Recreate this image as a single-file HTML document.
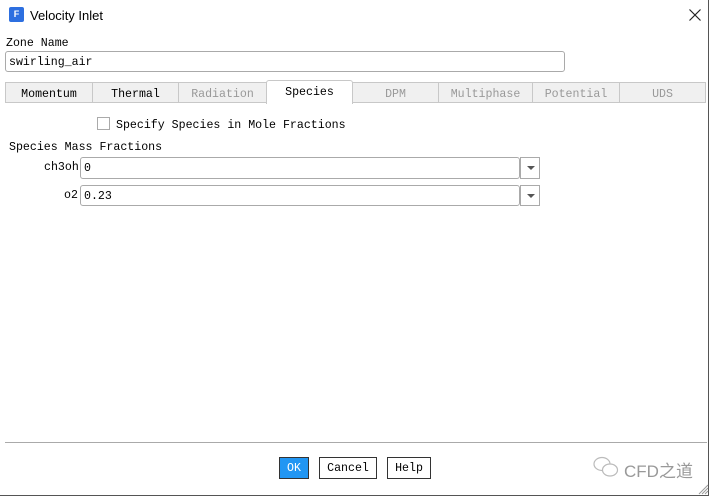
<!DOCTYPE html><html><head><style>
*{box-sizing:border-box;margin:0;padding:0}
body{width:711px;height:497px;background:#fff;font-family:"Liberation Mono",monospace;font-size:11.6px;color:#000;position:relative;overflow:hidden}
.a{position:absolute}
.tab{position:absolute;top:82px;height:21px;border:1px solid #c8c8c8;background:#f0f0f0;text-align:center;line-height:23px}
.dis{color:#999}
.inp{position:absolute;border:1px solid #aaa;border-radius:3px;background:#fff;padding-left:3px;line-height:22px}
.dd{position:absolute;width:20px;border:1px solid #aaa;background:#fff}
.dd:after{content:"";position:absolute;left:6px;top:8px;border-left:4px solid transparent;border-right:4px solid transparent;border-top:4px solid #555}
.btn{position:absolute;top:457px;height:22px;border:1px solid #333;text-align:center;line-height:22px;background:#fff}
</style></head><body>
<div class="a" style="left:0;top:0;width:709px;height:496px;border-right:1px solid #555;border-bottom:1px solid #555"></div>
<div class="a" style="left:9px;top:7px;width:15px;height:15px;background:#2d6fe0;border-radius:2px;color:#fff;font:bold 9px 'Liberation Sans',sans-serif;text-align:center;line-height:15px">F</div>
<div class="a" style="left:30px;top:8px;font:13px 'Liberation Sans',sans-serif">Velocity Inlet</div>
<svg class="a" style="left:689px;top:9px" width="12" height="12"><path d="M0.5 0.5L11.5 11.5M11.5 0.5L0.5 11.5" stroke="#222" stroke-width="1.2"/></svg>
<div class="a" style="left:6px;top:37px">Zone Name</div>
<div class="inp" style="left:5px;top:51px;width:560px;height:21px">swirling_air</div>
<div class="tab" style="left:5px;width:88px">Momentum</div>
<div class="tab" style="left:92px;width:87px">Thermal</div>
<div class="tab dis" style="left:178px;width:89px">Radiation</div>
<div class="tab" style="left:266px;width:87px;top:80px;height:24px;background:#fff;border-bottom:none;border-radius:3px 3px 0 0">Species</div>
<div class="tab dis" style="left:352px;width:87px">DPM</div>
<div class="tab dis" style="left:438px;width:95px">Multiphase</div>
<div class="tab dis" style="left:532px;width:88px">Potential</div>
<div class="tab dis" style="left:619px;width:87px">UDS</div>
<div class="a" style="left:97px;top:117px;width:13px;height:13px;border:1px solid #aaa"></div>
<div class="a" style="left:116px;top:119px">Specify Species in Mole Fractions</div>
<div class="a" style="left:9px;top:141px">Species Mass Fractions</div>
<div class="a" style="left:44px;top:161px">ch3oh</div>
<div class="inp" style="left:80px;top:157px;width:440px;height:22px">0</div>
<div class="dd" style="left:520px;top:157px;height:22px"></div>
<div class="a" style="left:64px;top:189px">o2</div>
<div class="inp" style="left:80px;top:185px;width:440px;height:21px">0.23</div>
<div class="dd" style="left:520px;top:185px;height:21px"></div>
<div class="a" style="left:5px;top:442px;width:702px;height:1px;background:#aaa"></div>
<div class="btn" style="left:279px;width:30px;background:#2196f3;color:#fff;border-color:#333">OK</div>
<div class="btn" style="left:319px;width:58px">Cancel</div>
<div class="btn" style="left:387px;width:44px">Help</div>
<svg class="a" style="left:592px;top:455px" width="30" height="24"><ellipse cx="10" cy="9" rx="8" ry="6.5" fill="none" stroke="#bbb" stroke-width="1.2"/><ellipse cx="18" cy="15" rx="7.5" ry="6" fill="#fff" stroke="#bbb" stroke-width="1.2"/></svg>
<div class="a" style="left:624px;top:457px;font:17px 'Liberation Sans','Noto Sans CJK SC',sans-serif;color:#999">CFD之道</div>
<svg class="a" style="left:697px;top:483px" width="12" height="12"><path d="M11 2L2 11M11 5L5 11M11 8L8 11" stroke="#999"/></svg>
</body></html>
